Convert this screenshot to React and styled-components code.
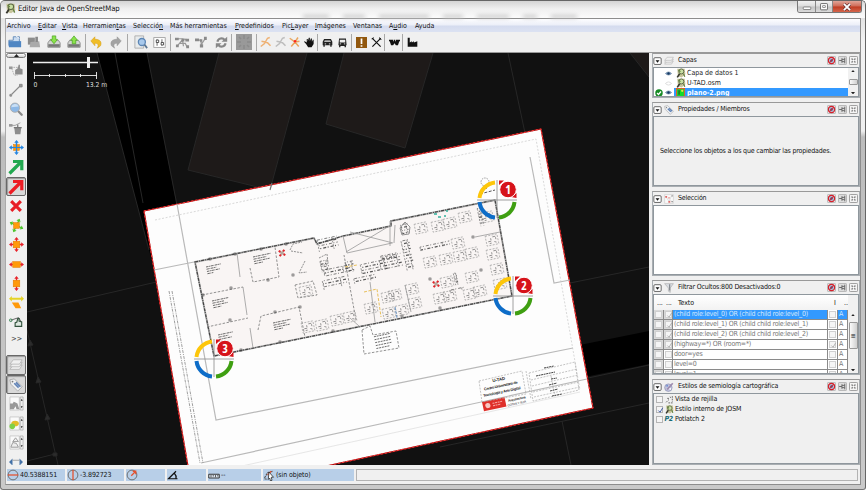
import React from "react";
import styled, { createGlobalStyle } from "styled-components";

const Global = createGlobalStyle`
  * { box-sizing: border-box; }
  body { margin: 0; overflow: hidden; }
`;

/* ---------- window frame ---------- */
const Window = styled.div`
  width: 866px;
  height: 490px;
  display: flex;
  flex-direction: column;
  padding: 0 4px 4px;
  background: linear-gradient(#d9d9d9, #f2f2f2 40px, #efefef 130px, #bdbdbd 136px, #c9c9c9);
  border-left: 1px solid #777;
  border-right: 1px solid #666;
  border-bottom: 1px solid #777;
  border-top: 1px solid #666;
  border-radius: 5px 5px 3px 3px;
  font-family: "DejaVu Sans Condensed", "DejaVu Sans", sans-serif;
  font-stretch: condensed;
  font-size: 7px;
  line-height: 10px;
  letter-spacing: -0.1px;
  color: #111;
  white-space: nowrap;
`;
const TitleBar = styled.header`
  height: 17px;
  flex: none;
  display: flex;
  margin: 0 -4px;
  padding-left: 4px;
  border-radius: 4px 4px 0 0;
  background: linear-gradient(#d4d4d4, #f0f0f0 8px, #fbfbfb);
`;
const Title = styled.h1`
  margin: 3px 0 0 2px;
  font-size: 7.7px;
  font-weight: 400;
  line-height: 10px;
  width: 285px;
`;
const AppIcon = styled.div`
  height: 12px;
  margin-top: 2px;
`;
const Smudge = styled.i`
  width: ${(p) => p.$w}px;
  height: 3px;
  margin: 14px 14px 0 0;
  background: #c4c4c4;
  filter: blur(2px);
`;
const WindowButtons = styled.div`
  margin-left: auto;
  margin-right: 3px;
  height: 12px;
  display: flex;
  border: 1px solid #777;
  border-top: 0;
  border-radius: 0 0 3px 3px;
  overflow: hidden;
`;
const WindowButton = styled.button`
  width: ${(p) => (p.$close ? 29 : 17)}px;
  padding: 0;
  border: 0;
  border-left: ${(p) => (p.$first ? 0 : "1px solid #888")};
  display: grid;
  place-items: center;
  background: ${(p) =>
    p.$close ? "linear-gradient(#e0a598, #cf6a56 48%, #bf3b22 52%, #d4664c)" : "linear-gradient(#f1f1f1, #dcdcdc 48%, #c3c3c3 52%, #dadada)"};
`;
const Client = styled.div`
  flex: 1;
  min-height: 0;
  display: flex;
  flex-direction: column;
  background: #f0f0f0;
  border: 1px solid #8d8d8d;
  border-left-color: #aaa;
`;

/* ---------- menu and toolbar ---------- */
const MenuBar = styled.nav`
  height: 13px;
  flex: none;
  display: flex;
  align-items: center;
  padding-left: 1px;
  letter-spacing: 0;
  background: linear-gradient(#fdfdff, #eceff8 45%, #d4dbee 55%, #dce2f2);
`;
const MenuItem = styled.span`
  width: ${(p) => p.$w}px;
  u { text-underline-offset: 1px; text-decoration-thickness: 0.6px; }
`;
const ToolBar = styled.div`
  height: 21px;
  flex: none;
  display: flex;
  align-items: center;
  border-bottom: 1px solid #999;
`;
const Tool = styled.div`
  width: ${(p) => p.$w}px;
  height: 16px;
  display: grid;
  place-items: center;
  flex: none;
`;
const Divider = styled.i`
  width: 1px;
  height: 17px;
  background: #a8a8a8;
  margin: 0 ${(p) => p.$r ?? 0}px 0 ${(p) => p.$l ?? 0}px;
`;

/* ---------- body ---------- */
const Body = styled.main`
  height: 412px;
  flex: none;
  display: flex;
`;
const SideBar = styled.aside`
  width: 21px;
  flex: none;
  display: flex;
  flex-direction: column;
  overflow: hidden;
  padding-right: 1px;
`;
const ScrollArrow = styled.div`
  height: 5px;
  flex: none;
  display: grid;
  place-items: center;
  margin: ${(p) => (p.$down ? "-6px 0 0" : "0 0 2.5px")};
  z-index: 1;
  border: 1px solid #777;
  border-radius: 3px;
  background: linear-gradient(#fff, #ccc);
`;
const SideTool = styled.div`
  height: 19.4px;
  flex: none;
  display: grid;
  place-items: center;
  border: ${(p) => (p.$on ? "1px solid #686868" : "1px solid transparent")};
  border-radius: 2px;
  background: ${(p) => (p.$on ? "#d9d9d9" : "none")};
  box-shadow: ${(p) => (p.$on ? "inset 1px 1px 1px #999" : "none")};
`;
const More = styled.div`
  height: 23.5px;
  padding: 2px 0 0 5px;
  font-size: 7.5px;
  color: #444;
  flex: none;
`;
const MapSvg = styled.svg`
  width: 622px;
  height: 412px;
  display: block;
  flex: none;
  background: #111;
`;
const Dock = styled.div`
  flex: 1;
  margin-left: 3px;
  display: flex;
  flex-direction: column;
  gap: 4px;
`;
const Panel = styled.section`
  height: ${(p) => p.$h}px;
  flex: none;
  display: flex;
  flex-direction: column;
  border: 1px solid #a9aeb2;
  border-top-color: #999;
`;
const PanelHead = styled.header`
  height: 13px;
  flex: none;
  display: flex;
  align-items: center;
  padding: 0 1px 0 0;
  gap: 2px;
`;
const PanelTitle = styled.h2`
  flex: 1;
  margin: -1px 0 0 2px;
  font-size: 7px;
  line-height: 10px;
  font-weight: 400;
  letter-spacing: -0.18px;
`;
const PanelBody = styled.div`
  flex: 1;
  min-height: 0;
  overflow: hidden;
  border: 1px solid #8f979d;
  display: flex;
  background: ${(p) => (p.$white ? "#fff" : "#f0f0f0")};
`;
const Hint = styled.p`
  margin: 0;
  padding: 29px 0 0 6px;
  letter-spacing: -0.19px;
`;
const List = styled.div`
  flex: 1;
`;
const LayerRow = styled.div`
  height: ${(p) => (p.$sel ? 9 : 10)}px;
  display: flex;
  align-items: center;
  letter-spacing: 0;
  color: ${(p) => (p.$sel ? "#fff" : "#1c1c1c")};
  font-weight: ${(p) => (p.$sel ? 700 : 400)};
  background: linear-gradient(90deg, transparent 20px, ${(p) => (p.$sel ? "#3399ff" : "#fff")} 20px);
`;
const Cell = styled.span`
  width: ${(p) => p.$w}px;
  height: 10px;
  display: grid;
  place-items: center;
`;
const Scroll = styled.div`
  width: 10px;
  flex: none;
  display: flex;
  flex-direction: column;
  justify-content: space-between;
  align-items: center;
  padding: ${(p) => p.$top || 2}px 0 2px;
  background: #f1f1f1;
`;
const Thumb = styled.i`
  width: 9px;
  height: ${(p) => p.$h}px;
  margin-bottom: ${(p) => p.$mb || 0}px;
  display: grid;
  place-items: center;
  border: 1px solid #999;
  border-radius: 1px;
  background: linear-gradient(90deg, #fafafa, #d0d0d0);
`;
const Grid = styled.div`
  width: 194px;
  overflow: hidden;
  flex: none;
`;
const GridHead = styled.div`
  height: 14.5px;
  display: grid;
  grid-template-columns: 9px 12px 156px 10px 1fr;
  padding-left: 3px;
  padding-top: 2.5px;
  background: linear-gradient(#fff, #f2f2f2);
`;
const GridRow = styled.div`
  height: 10px;
  display: grid;
  grid-template-columns: 9.5px 9.5px 155px 10px 10px;
  color: #777;
`;
const GridCell = styled.span`
  border-right: 1px solid #8a8a8a;
  border-bottom: 1px solid #8a8a8a;
  line-height: 8.5px;
  padding-left: 1px;
  overflow: hidden;
  letter-spacing: -0.25px;
  color: ${(p) => (p.$sel ? "#d5e8fb" : "#777")};
  background: ${(p) => (p.$sel ? "#3399ff" : p.$gray ? "#d9d9d9" : "#fff")};
`;
const Check = styled.i`
  display: grid;
  place-items: center;
  width: 7px;
  height: 7px;
  margin: 1px 0;
  border: 1px solid ${(p) => (p.$dim ? "#d0d0d0" : "#b5b5b5")};
  background: #f5f5f5;
`;
const StyleRow = styled.div`
  height: 10px;
  display: flex;
  align-items: center;
  padding-left: 2px;
  gap: 1.5px;
  letter-spacing: -0.15px;
`;
const P2 = styled.b`
  width: 9px;
  font-style: italic;
  color: #176a75;
  font-size: 7px;
  letter-spacing: -0.4px;
`;

/* ---------- status bar ---------- */
const StatusBar = styled.footer`
  flex: 1;
  display: flex;
  gap: 2px;
  padding: 4px 1px 3px 1px;
`;
const StatusCell = styled.div`
  width: ${(p) => p.$w}px;
  display: flex;
  align-items: center;
  gap: 1px;
  background: #b8cfe8;
`;
const StatusHelp = styled.div`
  flex: 1;
  margin-right: 1px;
  border: 1px solid #b3b3b3;
`;

/* ---------- icons ---------- */
const Svg = ({ s = 14, children }) => (
  <svg width={s} height={s} viewBox="0 0 16 16" fill="none">{children}</svg>
);
const Josm = ({ s = 11 }) => (
  <Svg s={s}>
    <path d="M2 1h12l1 9-6 5-6-2z" fill="#c8c59c" />
    <path d="M2 15L6 9" stroke="#35352c" strokeWidth="2.6" />
    <circle cx="8.5" cy="5.5" r="4" fill="#c9dfa3" stroke="#5c6844" strokeWidth="1.5" />
    <path d="M12 9l2 5M4 3l3 3" stroke="#64813f" strokeWidth="2" />
  </Svg>
);
const Disk = ({ up }) => (
  <Svg>
    <path d="M1 9l2-3h10l2 3v5H1z" fill="#d3d5d3" stroke="#888" />
    <path d="M1.5 10.500h13v3h-13z" fill="#777" />
    <path d={up ? "M8 1l4 5h-2v4H6V6H4z" : "M8 10L4 5h2V1h4v4h2z"} fill="#8be34b" stroke="#49a51d" strokeWidth=".8" />
  </Svg>
);
const Network = ({ kind }) => (
  <Svg>
    {kind === "del" ? (
      <>
        <path d="M1 5h6l6-3" stroke="#999" />
        <path d="M0 3.500h4v3H0z" fill="#999" />
        <path d="M6 7h8l-1 8H7z" fill="#8d8d8d" />
        <path d="M5.5 7.500h9M10 4v3" stroke="#777" strokeWidth="1.4" />
      </>
    ) : kind === "line" ? (
      <>
        <path d="M3 13L13 3" stroke="#8a8a8a" strokeWidth="1.6" />
        <path d="M1 13h2v2H1zM12 1.500h3v3h-3z" fill="#999" stroke="#888" />
      </>
    ) : (
      <>
        <path d="M2 5h8M3 6l3 8 4 0" stroke="#aaa" strokeDasharray="2 1" />
        <path d="M0 4h4v3H0z" fill="#999" />
        <path d="M7 13V8l3-2 1-4 1.500 0v4l3 1v6z" fill="#8d8d8d" />
      </>
    )}
  </Svg>
);
const arrows = ["M8 0l2.400 3H8.700v2H7.300V3H5.600z", "M8 16l2.400-3H8.700v-2H7.300v2H5.600z", "M0 8l3-2.400v1.700h2v1.400H3v1.700z", "M16 8l-3-2.400v1.700h-2v1.400h2v1.700z"];
const Transform = ({ dirs = [0, 1, 2, 3], color = "#e8222a", size = 6, turn = 0, wide, over }) => (
  <Svg s={15}>
    {!over && <g transform={`rotate(${turn} 8 8)`} fill={color}>{dirs.map((i) => <path key={i} d={arrows[i]} />)}</g>}
    <rect x={8 - (wide ? 4 : size / 2)} y={8 - size / 2} width={wide ? 8 : size} height={size} fill="#ff9a0a" stroke="#e67a00" strokeWidth=".6" />
    {over && <><path d="M2 8h12M8 2v12" stroke={color} strokeWidth="1.300" /><g fill={color}>{dirs.map((i) => <path key={i} d={arrows[i]} />)}</g></>}
  </Svg>
);
const BigArrow = ({ c }) => (
  <Svg s={16}><path d="M1.500 14.500L13 3M5 2.500h8.800v8.700" stroke={c} strokeWidth="3.200" /></Svg>
);
const Magnifier = () => (
  <Svg>
    <path d="M10 10l4.500 4.500" stroke="#888" strokeWidth="2.600" strokeLinecap="round" />
    <circle cx="6.800" cy="6.500" r="5.300" fill="#8db8e6" stroke="#aaa" />
    <path d="M2.500 6a4.500 4.500 0 018.500-1z" fill="#c9dff5" />
  </Svg>
);
const Layers = ({ s = 14 }) => (
  <Svg s={s}>
    {[10, 7, 4].map((y) => <path key={y} d={`M1 ${y + 3}l4-5h10l-3 5z`} fill="#f0f0f0" stroke="#aaa" strokeWidth=".8" />)}
  </Svg>
);
const Tag = ({ s = 14 }) => (
  <Svg s={s}>
    <path d="M1 2l5-1 9 9-5 5-8-8z" fill="#eef0f2" stroke="#999" strokeWidth=".8" />
    <path d="M6 6l5 5M8 5l5 5" stroke="#5f82b6" strokeWidth="1.800" />
    <circle cx="4" cy="4" r="1" fill="#777" />
  </Svg>
);
const Thumbnail = ({ kind }) => (
  <Svg s={15}>
    <path d="M1 1h10v14H1z" fill="#fafafa" stroke="#bbb" strokeWidth=".7" />
    <path d="M12 1h3v14h-3z" fill="#eee" stroke="#999" strokeWidth=".6" />
    <path d="M12.600 5l1-2 1 2zM12.600 11l1 2 1-2z" fill="#222" />
    {kind === 0 && <path d="M1 8h3l1-2 2 1 2 1 2 6H8l-1-3-2 3H1z" fill="#999" />}
    {kind === 1 && <><ellipse cx="6.500" cy="8" rx="4" ry="3" fill="#e2bd28" /><ellipse cx="3.500" cy="11" rx="3" ry="3" fill="#7fd048" /></>}
    {kind === 2 && <path d="M2 13l2-5 4 1 2 4zM4 7l3-4 3 4z" fill="#eee" stroke="#999" />}
  </Svg>
);
const Figure = ({ c, star }) => (
  <Svg s={12}>
    <path d={star ? "M1 3l7 5 5 6M3 14l5-6 4-6M8 8l6-1" : "M1 14l5-4 4-7 3-1M7 8l3 1 4 4M2 7l5 1"} stroke={c} strokeWidth="2" />
    {star && <circle cx="8" cy="7" r="1.600" fill="#f22" />}
  </Svg>
);
const Vehicle = ({ bus }) => (
  <Svg s={11}>
    <path d={bus ? "M3 2h10l1 10h-1v3h-2v-2H5v2H3v-3H2z" : "M1 7l2-4h10l2 4v5h-1v2h-2v-2H4v2H2v-2H1z"} fill="#222" />
    <path d={bus ? "M4 4h8v4H4z" : "M4 5h8l1 2H3z"} fill="#eee" />
    <path d="M4 10h2M10 10h2" stroke="#eee" strokeWidth="1.300" />
  </Svg>
);
const Curl = ({ redo }) => (
  <Svg s={13}>
    <g transform={redo ? "translate(16 0) scale(-1 1)" : undefined}>
      <path d="M1 6L6 1v3c6 0 9 3 7 8l-4 3c2-4 1-6-3-6v3z" fill={redo ? "#a3a3a3" : "#f0bd27"} stroke={redo ? "#929292" : "#d19a12"} strokeWidth=".6" />
    </g>
  </Svg>
);
const Refresh = () => (
  <Svg s={13}><path d="M3 7a5 5 0 019-2M13 9a5 5 0 01-9 2" stroke="#888" strokeWidth="2.600" /><path d="M15 1v6H8zM1 15V9h7z" fill="#888" /></Svg>
);
const Tri = ({ down, s = 5 }) => (
  <svg width={s} height={s * 0.6} viewBox="0 0 10 6"><path d={down ? "M0 0h10L5 6z" : "M0 6h10L5 0z"} fill="#222" /></svg>
);
const Eye = ({ off }) => (
  <Svg s={7}><path d="M1 8q7-7 14 0q-7 7-14 0z" fill={off ? "#fff" : "#7c9cc0"} stroke={off ? "#ccc" : "#6b849f"} strokeWidth="1.500" />{!off && <circle cx="8" cy="8" r="2.800" fill="#173a63" />}</Svg>
);
const Collapse = () => (
  <Svg s={9}><rect x="1.500" y="3" width="13" height="12" rx="2" fill="#fff" stroke="#444" strokeWidth="1.400" /><path d="M4.500 7.500h7L8 12z" fill="#111" /></Svg>
);
const NoEye = () => (
  <Svg s={9}><rect x=".7" y=".7" width="14.600" height="14.600" rx="2" fill="#eee" stroke="#999" strokeWidth="1.200" /><circle cx="8" cy="8" r="5.500" fill="#b7c3d9" stroke="#d6202a" strokeWidth="2" /><circle cx="8" cy="8" r="2.200" fill="#334f80" /><path d="M4 12l8-8" stroke="#d6202a" strokeWidth="1.800" /></Svg>
);
const Pin = () => (
  <Svg s={9}><rect x=".7" y=".7" width="14.600" height="14.600" rx="2" fill="#ddd" stroke="#999" strokeWidth="1.200" /><path d="M2 8h5M7 4v8M7 6h5M7 10h5M12 3v10" stroke="#666" strokeWidth="1.700" /></Svg>
);
const Close = () => (
  <Svg s={9}><rect x=".7" y=".7" width="14.600" height="14.600" rx="2" fill="#f4f4f4" stroke="#888" strokeWidth="1.500" /><path d="M4.500 4.500l7 7M11.500 4.500l-7 7" stroke="#888" strokeWidth="2.500" /><path d="M6 8h4M8 6v4" stroke="#fff" strokeWidth="2" /></Svg>
);
const Tick = ({ c = "#aaa" }) => <Svg s={7}><path d="M3 8l4 4 6-10" stroke={c} strokeWidth="2" /></Svg>;
const Scatter = ({ s = 10 }) => (
  <Svg s={s}><path d="M1 1h14v14H1z" fill="#fafafa" stroke="#ccc" /><path d="M3 4l5 8 4-9M10 10l4 3" stroke="#ccc" /><path d="M2 3h3v3H2zM7 11h3v3H7zM7 5h2v2H7z" fill="#e06b68" /><path d="M12 2h2v2h-2zM12 11h2v2h-2z" fill="#888" /></Svg>
);
const Funnel = () => <Svg s={10}><path d="M1 1h14L10 8v7l-3-2V8z" fill="#d9dde2" stroke="#aaa" /><path d="M9 2v10" stroke="#858a90" strokeWidth="2" /></Svg>;
const Palette = () => <Svg s={10}><circle cx="7" cy="9" r="6" fill="#c2c5dc" stroke="#8589b0" /><path d="M5 12L14 2" stroke="#9e8bae" strokeWidth="2.600" /><circle cx="5" cy="6" r="1.500" fill="#6e8fd3" /><circle cx="10" cy="11" r="1.500" fill="#fff" /></Svg>;
const Compass = ({ kind }) => (
  <Svg s={12}>
    <circle cx="8" cy="8" r="6.500" stroke="#666" strokeWidth="1.200" />
    <path d={["M1 8h14", "M8 1v14", "M7 9l6-6M9 3h4v4"][kind]} stroke="#e5512e" strokeWidth="1.700" />
  </Svg>
);

/* ---------- data ---------- */
const menus = [
  [31, "", "", "Archivo"], [24, "", "E", "ditar"], [21, "", "V", "ista"], [50, "Herramien", "t", "as"],
  [37, "Selecció", "n", ""], [65, "", "", "Más herramientas"], [47, "", "P", "redefinidos"], [33, "Pic", "L", "ayer"],
  [38, "", "I", "mágenes"], [36, "", "", "Ventanas"], [26, "A", "u", "dio"], [30, "", "", "Ayuda"],
];
const filters = [
  ["(child role:level_0) OR (child child role:level_0)", 1, 0],
  ["(child role:level_1) OR (child child role:level_1)", 1, 0],
  ["(child role:level_2) OR (child child role:level_2)", 1, 0],
  ["(highway=*) OR (room=*)", 1, 1],
  ["door=yes", 0, 0],
  ["level=0", 0, 0],
  ["level=1", 1, 0],
];
const desks = [
  [308, 327], [322, 325], [337, 320], [350, 317], [421, 228], [438, 226], [450, 223], [465, 217],
  [430, 262], [446, 259], [460, 256], [472, 253], [458, 243], [492, 240], [493, 254], [497, 269], [500, 284],
  [447, 282], [472, 277], [440, 298], [450, 296], [470, 294], [480, 291], [412, 289], [415, 303],
  [388, 297], [395, 295], [371, 308], [389, 313], [402, 310], [487, 217], [306, 291],
];
const clutter = [
  [328, 244, 20, 12], [325, 266, 8, 11], [337, 271, 26, 7], [335, 283, 24, 9],
  [374, 267, 26, 10], [393, 262, 18, 14], [408, 255, 8, 30], [365, 279, 22, 5], [389, 257, 16, 5], [435, 246, 30, 4],
  [350, 267, 8, 11], [456, 279, 3, 12], [481, 217, 4, 18], [405, 229, 7, 10], [458, 290, 16, 3],
];
const notes = [[206, 267, 15], [253, 257, 18], [212, 301, 17], [218, 335, 15], [273, 323, 18]];
const columns = [
  [210, 259], [235, 254], [261, 249], [286, 244], [203, 295], [231, 288], [230, 320], [268, 280], [275, 312], [300, 307],
  [241, 350], [280, 342], [333, 331], [293, 275], [430, 279], [481, 270], [473, 237], [402, 316], [440, 308],
];
const markers = [[497, 200, 1], [513, 296, 2], [214, 359, 3]];
const outline = "M195 262L314 238L317 244L343 236L391 226V221L495 200L512 296L214 356z";

const Marker = ({ x, y, n }) => (
  <g transform={`translate(${x} ${y})`}>
    <path d="M-20 0h40M0-20v38" stroke="#888" strokeWidth=".8" />
    <g fill="none" strokeWidth="4">
      <path d="M-17.500-2A17.500 17.500 0 01-2-17.500" stroke="#fdc60a" />
      <path d="M-17.500 2A17.500 17.500 0 00-2 17.500" stroke="#0e6dc8" />
      <path d="M17.500 2A17.500 17.500 0 012 17.500" stroke="#3f9f12" />
    </g>
    <path d="M2-19.500h5l-5 4.500zM19.500-2v-5L14-3z" fill="#d6131a" />
    <circle cx="11" cy="-10.500" r="8.300" fill="#d6131a" stroke="#fff" strokeWidth="1" />
    <text x="11" y="-6.300" textAnchor="middle" fontSize="12" fontWeight="700" fill="#fff" fontFamily="Open Sans, sans-serif">{n}</text>
  </g>
);
const RedCross = ({ x, y }) => (
  <g transform={`translate(${x} ${y}) rotate(35)`}>
    <path d="M-2.500 0h5M0-2.500v5" stroke="#b9a59b" strokeWidth="2" />
    <path d="M-4 0h2M2 0h2M0-4v2M0 2v2" stroke="#e2242b" strokeWidth="2" />
  </g>
);

const MapView = () => (
  <MapSvg viewBox="27 53 622 412">
    <path d="M97 53h50l42 216h-35zM560 349l89-18v33l-89 18z" fill="#000" />
    <path d="M219 53l-31 117 82 20 37-137zM344 53l-18 71 79 24 28-95zM630 53l19 24V53z" fill="#1e1a19" />
    <g stroke="#272727" strokeWidth="1" fill="none">
      <path d="M219 53l-31 117 82 20 37-137M344 53l-18 71 79 24 28-95M630 53l19 24M97 53l52 197M115 53l28 150M147 53l30 152M508 53l17 80" />
      <path d="M27 312L165 280M27 330L58 465M27 461L55 454M570 283l79-16M560 384l89-19M440 447l209-44M562 421l9 44" />
      <path d="M28 346l2-6 3 5zM36 383l2-6 3 5zM45 420l2-6 3 5zM53 453h4v3h-4z" fill="#2c2c2c" />
    </g>
    <path d="M144 211L541 129L593 408L193 495z" fill="#fdfdfd" stroke="#a81515" strokeWidth="1.200" />
    <path d="M144 211L541 129L593 408L193 495z" fill="none" stroke="#ff3b3b" strokeWidth="1" strokeDasharray="2 2" />
    <g fill="none" stroke="#b9b9b9" strokeWidth="1.200">
      <path d="M177 204L216 420L573 348M194 262L154 270M201 463L587 379M530 157L554 283L570 280" />
      <path d="M270 190l2-7" stroke="#777" />
    </g>
    <g fill="none" stroke="#c9c9c9" strokeWidth=".7" strokeDasharray="2 1.600">
      <path d="M155 220L536 139L580 390" />
    </g>
    <path d="M169 291L200 463M172 291L203 463" stroke="#888" strokeWidth=".8" strokeDasharray="3 1 1 1" />
    <path d="M210 473L580 392" stroke="#ddd" strokeWidth=".7" />

    <path d={outline} fill="#f9f5f4" stroke="#aaa" strokeWidth="1.800" />
    <path d={outline} fill="none" stroke="#444" strokeWidth="1.200" strokeDasharray="3 1.200 1 1" />
    <g fill="none" stroke="#999" strokeWidth=".8">
      <path d="M237 253l3 24M243 287l4 28M250 328l3 20M350 232l43 11M346 252l45-27M343 236l4 17 45-10M395 225l-1 18M350 318l9 8M390 221v25M475 237l25-5M495 200l-8 2M405 285l6 27M370 282l5 40" />
      <path d="M202 295l41-8M207 327l41-9M250 268l3 14 26-5-4-30M258 330l3-14 38-9 6 30M295 285l18-4 4 14-19 3zM356 320l-12-65" stroke="#777" strokeDasharray="2.500 1.500" />
    </g>
    <g fill="none" stroke="#444" strokeWidth=".6">
      {columns.map(([x, y]) => <rect key={`${x}-${y}`} x={x - 1} y={y - 1} width="2" height="2" />)}
    </g>
    <g fill="none">
      {desks.map(([x, y]) => (
        <g key={`${x},${y}`} transform={`translate(${x} ${y}) rotate(-12)`} strokeWidth=".65">
          <path d="M-6-5H6V5H-6z" stroke="#999" strokeDasharray="2 1.300" />
          <path d="M-4 1h3v-3M1-3h3v3M-3 3h2M2 2l2 1" stroke="#666" strokeDasharray="3 1" />
        </g>
      ))}
      {clutter.map(([x, y, w, h], k) => (
        <g key={k} transform={`translate(${x} ${y}) rotate(-12)`}>
          {Array.from({ length: Math.ceil(h / 3) }, (_, i) => (
            <path key={i} d={`M${-w / 2} ${-h / 2 + i * 3}h${w}`} stroke="#555" strokeWidth={i % 2 ? 1.2 : 0.7} strokeDasharray={i % 2 ? "1 2 3 1.500" : "3 1.500 1 2"} strokeDashoffset={i * 2 + k} />
          ))}
          <path d={`M${-w / 2} ${-h / 2}v${h}M${w / 4} ${-h / 2}v${h}`} stroke="#777" strokeWidth=".7" strokeDasharray="2 1.500" />
        </g>
      ))}
      {notes.map(([x, y, w]) => (
        <g key={`${x}`} transform={`translate(${x} ${y}) rotate(-12)`} stroke="#555" strokeWidth=".8">
          <path d={`M0 0h${w}M0 2.300h${w - 5}M0 4.600h${w - 2}M0 6.900h${w - 9}`} strokeDasharray="2.500 .5 1 .6" />
        </g>
      ))}
      <path d="M362 330l8-4 3 9 23-4 3 17-35 6z" stroke="#777" strokeWidth=".8" strokeDasharray="2.500 1.500" />
      <g transform="translate(383 341) rotate(-12)" stroke="#555" strokeWidth=".8" strokeDasharray="2 .8"><path d="M-8-6H8M-8-3H8M-8 0H8M-8 3H8M-8 6H6" /></g>
      <path d="M305 261l-6 12 8-1M319 258l8-4 1 9-7 4M290 250l3-6 9-2M291 251l12 2" stroke="#777" strokeWidth=".8" strokeDasharray="2 1" />
      <path d="M345 267l12-2M364 292l13-3 4 28" stroke="#e8c05c" strokeDasharray="3 1.500" />
      <path d="M395 307l2 11" stroke="#6c97c9" strokeDasharray="3 1" />
      <path d="M434 214h3M438 217h3M444 216h2M446 211h2" stroke="#30b09a" strokeWidth="1.300" />
      <circle cx="485" cy="182" r="4" stroke="#999" strokeDasharray="1.500 1" />
      <path d="M480 194l15-4M481 190l6-2" stroke="#555" strokeDasharray="3 1.500" />
      <path d="M400 228l5-6 5 5-1 7-7 1z" stroke="#777" strokeWidth=".8" />
    </g>
    <RedCross x={282} y={253} />
    <RedCross x={436} y={284} />

    <g fontFamily="Liberation Sans, sans-serif" fontWeight="700" fill="#222" textAnchor="middle">
      <text transform="translate(499 381) rotate(-12)" fontSize="4.400">U-TAD</text>
      <text transform="translate(501 387) rotate(-12)" fontSize="3.800" textLength="34">Centro Universitario de</text>
      <text transform="translate(502 393) rotate(-12)" fontSize="3.800" textLength="38">Tecnología y Arte Digital</text>
      <text transform="translate(517 400) rotate(-12)" fontSize="3.200">Arquitectura</text>
      <text transform="translate(517 404.500) rotate(-12)" fontSize="3" fontWeight="400">COTAS Y SUP.</text>
    </g>
    <g transform="translate(482 402) rotate(-12)">
      <rect width="23" height="9.500" fill="#df2f29" />
      <circle cx="5" cy="4.700" r="2.600" fill="#f8c5c0" />
      <path d="M10 3.500h10M10 6h8" stroke="#f5a49e" strokeWidth="1.100" strokeDasharray="2 .6" />
    </g>
    <g fill="none" stroke="#aaa" strokeWidth=".7" strokeDasharray="2 1.200">
      <path d="M479 381l43-10 4 23-44 8zM529 373l46-11 4 28-46 11zM531 380l46-11M532 386l46-11M533 392l46-10M534 397l46-10M526 371l5 28M551 376l4 20" />
    </g>
    <path d="M544 368l10-2M536 376l19-4M551 379l6-1M549 385l8-2M550 391l8-2M552 396l10-2" stroke="#444" strokeWidth="1" strokeDasharray="2 .6" />
    {markers.map(([x, y, n]) => <Marker key={n} x={x} y={y} n={n} />)}

    <g stroke="#eee" fill="none">
      <path d="M33 62.500h65" strokeWidth="1.600" />
      <path d="M88.500 57v11" strokeWidth="3" />
      <path d="M34.500 72v7M96.500 72v7M34 75.500h63M49.500 74v3M65.500 74v3M80.500 74v3" strokeWidth=".9" />
    </g>
    <g fill="#ddd" fontSize="6.800" fontFamily="DejaVu Sans Condensed, DejaVu Sans, sans-serif"><text x="33.500" y="87">0</text><text x="86" y="87" textLength="21">13.2 m</text></g>
  </MapSvg>
);

const Section = ({ h, title, icon, white, children }) => (
  <Panel $h={h}>
    <PanelHead><Collapse />{icon}<PanelTitle>{title}</PanelTitle><NoEye /><Pin /><Close /></PanelHead>
    <PanelBody $white={white}>{children}</PanelBody>
  </Panel>
);

export default function App() {
  return (
    <Window>
      <Global />
      <TitleBar>
        <AppIcon><Josm s={11} /></AppIcon>
        <Title>Editor Java de OpenStreetMap</Title>
        <Smudge $w={26} /><Smudge $w={22} /><Smudge $w={50} /><Smudge $w={20} /><Smudge $w={32} /><Smudge $w={14} /><Smudge $w={26} />
        <WindowButtons>
          <WindowButton $first><Svg s={10}><rect x="2" y="8" width="12" height="4" rx="1" fill="#fff" stroke="#555" /></Svg></WindowButton>
          <WindowButton><Svg s={10}><rect x="2.500" y="2.500" width="11" height="10" rx="1" fill="#fff" stroke="#555" strokeWidth="1.300" /><rect x="6" y="6" width="4" height="3" stroke="#555" /></Svg></WindowButton>
          <WindowButton $close><Svg s={10}><path d="M3 3l10 10M13 3L3 13" stroke="#633" strokeWidth="5" /><path d="M3 3l10 10M13 3L3 13" stroke="#fff" strokeWidth="3" /></Svg></WindowButton>
        </WindowButtons>
      </TitleBar>
      <Client>
        <MenuBar>
          {menus.map(([w, a, u, b]) => <MenuItem key={a + u + b} $w={w}>{a}{u && <u>{u}</u>}{b}</MenuItem>)}
        </MenuBar>
        <ToolBar>
          <Tool $w={18}><Svg><path d="M1 6h5V2h7v10H1z" fill="#c9dcf1" stroke="#5b85b5" /><path d="M1 7h14v7H1z" fill="#4f86c3" /><path d="M9 1l4 3" stroke="#fff" /></Svg></Tool>
          <Tool $w={20}><Svg><path d="M1 3h8v8H1z" fill="#8d8d8d" /><path d="M4 8l10-1 1 7H3z" fill="#aaa" /><path d="M11 2v6" stroke="#888" strokeWidth="3" /></Svg></Tool>
          <Tool $w={20}><Disk /></Tool>
          <Tool $w={19}><Disk up /></Tool>
          <Divider $l={2} $r={2} />
          <Tool $w={16}><Curl /></Tool>
          <Tool $w={23}><Curl redo /></Tool>
          <Divider $r={4} />
          <Tool $w={17}><Svg><path d="M1 1h10v14H1z" fill="#e8ebec" stroke="#aaa" /><circle cx="9" cy="8" r="4" fill="#a8c9ec" stroke="#5d86b5" strokeWidth="1.500" /><path d="M12 11l3 4" stroke="#5d7793" strokeWidth="2" /></Svg></Tool>
          <Tool $w={21}><Svg s={13}><rect x="1" y="2" width="14" height="12" fill="#fff" stroke="#999" /><path d="M5 4v8M11 4v8" stroke="#444" /><path d="M4 5h3v3H4zM10 8h3v3h-3z" fill="#fff" stroke="#333" /></Svg></Tool>
          <Divider $r={3} />
          <Tool $w={17}><Svg s={15}><path d="M1 4h6l6 1M3 11l5-6 1 7M5 9h6l2 4" stroke="#999" strokeWidth="1.300" /><path d="M0 3h4v2.500H0zM7 4h3v3H7zM11 4h4v3h-4zM12 11h3v3h-3zM1 10h3v3H1z" fill="#8a8a8a" /></Svg></Tool>
          <Tool $w={20}><Svg s={13}><path d="M2 5h5l1 6M8 10l4-6" stroke="#999" strokeWidth="1.600" /><path d="M0 3h5v3.500H0zM11 1h3.500v4H11zM6 10h4v4H6zM6 4h3v3H6z" fill="#8a8a8a" /></Svg></Tool>
          <Tool $w={20}><Refresh /></Tool>
          <Divider $r={3} />
          <Tool $w={18}><Svg s={16}><path d="M0 0h16v16H0z" fill="#999" /><path d="M8 1v4M8 11v4M1 8h4M11 8h4M3 3l2 2M13 3l-2 2M3 13l2-2M13 13l-2-2" stroke="#8b8b8b" strokeWidth="1.500" /></Svg></Tool>
          <Divider $l={3} $r={1} />
          <Tool $w={15}><Figure c="#eeb174" /></Tool>
          <Tool $w={15}><Figure c="#bdbdbd" /></Tool>
          <Tool $w={14}><Figure c="#e9a55f" star /></Tool>
          <Tool $w={14}><Svg s={11}><path d="M3 10L0 7l1-1 3 2V3h1.500v3L7 1h1.500v5L10 2h1.500v5L13 4h1v6l-3 5H6z" fill="#111" /></Svg></Tool>
          <Divider $l={1} $r={2} />
          <Tool $w={15}><Vehicle /></Tool>
          <Tool $w={15}><Vehicle bus /></Tool>
          <Divider $l={1} $r={2} />
          <Tool $w={15}><Svg s={11}><path d="M0 0h16v16H0z" fill="#92580f" /><path d="M8 2v8M8 12v2" stroke="#fff" strokeWidth="2.500" /></Svg></Tool>
          <Tool $w={15}><Svg s={11}><path d="M2 2l12 12M14 2L2 14" stroke="#111" strokeWidth="1.700" /><path d="M1 3l3-2M12 1l3 3" stroke="#111" strokeWidth="1.500" /></Svg></Tool>
          <Divider $r={1} />
          <Tool $w={16}><Svg s={11}><path d="M0 4h6v2h1V4h2v2h1V4h6v2h-1l-2 6h-3l-2-3-2 3H3L1 6H0z" fill="#111" /></Svg></Tool>
          <Divider $r={1} />
          <Tool $w={17}><Svg s={11}><path d="M1 1h3v7l3-2v2l3-2v2l5-2v8H1z" fill="#111" /></Svg></Tool>
        </ToolBar>
        <Body>
          <SideBar>
            <ScrollArrow><Tri /></ScrollArrow>
            <SideTool><Network /></SideTool>
            <SideTool><Network kind="line" /></SideTool>
            <SideTool><Magnifier /></SideTool>
            <SideTool><Network kind="del" /></SideTool>
            <SideTool><Transform color="#2585e0" size={6} over /></SideTool>
            <SideTool><BigArrow c="#22a850" /></SideTool>
            <SideTool $on><BigArrow c="#ed1c24" /></SideTool>
            <SideTool><Svg><path d="M2.500 2.500l11 11M13.500 2.500l-11 11" stroke="#e81d25" strokeWidth="3.600" /></Svg></SideTool>
            <SideTool><Transform color="#4cc42a" turn={25} /></SideTool>
            <SideTool><Transform size={7} /></SideTool>
            <SideTool><Transform dirs={[2, 3]} wide /></SideTool>
            <SideTool><Transform dirs={[0, 1]} size={7} /></SideTool>
            <SideTool><Svg s={15}><path d="M0 4l3-3v2h10V1l3 3-3 3V5H3v2z" fill="#e5d326" /><path d="M3 8h7l3 6H7z" fill="#ff9a0a" /></Svg></SideTool>
            <SideTool><Svg><path d="M2 6l9-3 3 5" stroke="#555" /><circle cx="2" cy="6" r="1.500" stroke="#2e7d4b" /><path d="M7 9l2-1 1-4 1.500 0v3l3 1v5H7z" fill="#dfe9e2" stroke="#34543f" strokeWidth="1.300" /></Svg></SideTool>
            <More>&gt;&gt;</More>
            <SideTool $on><Layers /></SideTool>
            <SideTool $on><Tag /></SideTool>
            <SideTool><Thumbnail kind={0} /></SideTool>
            <SideTool><Thumbnail kind={1} /></SideTool>
            <SideTool><Thumbnail kind={2} /></SideTool>
            <SideTool><Svg><path d="M0 8l4-4v8zM16 8l-4-4v8z" fill="#4572a8" /><path d="M4 6h8" stroke="#999" /></Svg></SideTool>
            <ScrollArrow $down><Tri down /></ScrollArrow>
          </SideBar>
          <MapView />
          <Dock>
            <Section h={45} title="Capas" icon={<Layers s={10} />} white>
              <List>
                <LayerRow><Cell $w={9} /><Cell $w={11}><Eye /></Cell><Cell $w={13}><Josm s={10} /></Cell>Capa de datos 1</LayerRow>
                <LayerRow><Cell $w={9} /><Cell $w={11}><Eye off /></Cell><Cell $w={13}><Josm s={10} /></Cell>U-TAD.osm</LayerRow>
                <LayerRow $sel><Cell $w={9}><Svg s={8}><circle cx="8" cy="8" r="7.500" fill="#168a24" /><path d="M4 8l3 3 5-6" stroke="#fff" strokeWidth="2.500" /></Svg></Cell><Cell $w={11}><Eye /></Cell><Cell $w={13}><Svg s={9}><path d="M1 1h14v14H1z" fill="#0fdc2a" stroke="#d9632b" strokeWidth="2" /><path d="M4 4h3v8H4z" fill="#217a25" /><circle cx="11" cy="5" r="2" fill="#e8e14c" /></Svg></Cell>plano-2.png</LayerRow>
              </List>
              <Scroll><Tri s={4} /><Thumb $h={6} /><Tri down s={4} /></Scroll>
            </Section>
            <Section h={85} title="Propiedades / Miembros" icon={<Tag s={10} />}><Hint>Seleccione los objetos a los que cambiar las propiedades.</Hint></Section>
            <Section h={85} title="Selección" icon={<Scatter />} white />
            <Section h={95} title="Filtrar Ocultos:800 Desactivados:0" icon={<Funnel />} white>
              <Grid>
                <GridHead><span>...</span><span>...</span><span>Texto</span><span>I</span><span>...</span></GridHead>
                {filters.map(([t, on, inv], i) => (
                  <GridRow key={t}>
                    <GridCell $gray><Check $dim /></GridCell>
                    <GridCell $gray={i < 4}><Check $dim>{on ? <Tick /> : null}</Check></GridCell>
                    <GridCell $sel={i === 0}>{t}</GridCell>
                    <GridCell><Check $dim>{inv ? <Tick /> : null}</Check></GridCell>
                    <GridCell $sel={i === 0}>A</GridCell>
                  </GridRow>
                ))}
              </Grid>
              <Scroll $top={19}><Tri s={4} /><Thumb $h={27} $mb={14}>≡</Thumb><Tri down s={4} /></Scroll>
            </Section>
            <Section h={86} title="Estilos de semiología cartográfica" icon={<Palette />}>
              <List>
                <StyleRow><Check /><Svg s={9}><path d="M2 13l5-5M9 3l1 2M13 2v10M4 6h3M6 14h8" stroke="#555" strokeWidth="1.500" strokeDasharray="3 1.500" /></Svg>Vista de rejilla</StyleRow>
                <StyleRow><Check><Tick c="#2f4fa0" /></Check><Josm s={9} />Estilo interno de JOSM</StyleRow>
                <StyleRow><Check /><P2>P2</P2>Potlatch 2</StyleRow>
              </List>
            </Section>
          </Dock>
        </Body>
        <StatusBar>
          <StatusCell $w={58}><Compass kind={0} />40.5388151</StatusCell>
          <StatusCell $w={57}><Compass kind={1} />-3.892723</StatusCell>
          <StatusCell $w={39}><Compass kind={2} /></StatusCell>
          <StatusCell $w={39}><Svg s={12}><path d="M14 13H2L12 3M10 6q3 3 2 7" stroke="#111" strokeWidth="1.600" /></Svg></StatusCell>
          <StatusCell $w={53}><Svg s={12}><path d="M1 7h14v5H1z" fill="#dde6f0" stroke="#333" strokeWidth="1.300" /><path d="M4 8v3M7 8v2M10 8v3M13 8v2" stroke="#333" /></Svg>--</StatusCell>
          <StatusCell $w={91}><Svg s={12}><path d="M2 12L6 5l7-2M2 13l4 1" stroke="#555" strokeWidth="1.500" strokeDasharray="3 1" /><path d="M6 8l5-5" stroke="#e5512e" strokeWidth="1.500" /><path d="M8 4l6 7h-3l1 4-2 1-1-4-2 2z" fill="#fff" stroke="#222" /></Svg>(sin objeto)</StatusCell>
          <StatusHelp />
        </StatusBar>
      </Client>
    </Window>
  );
}
